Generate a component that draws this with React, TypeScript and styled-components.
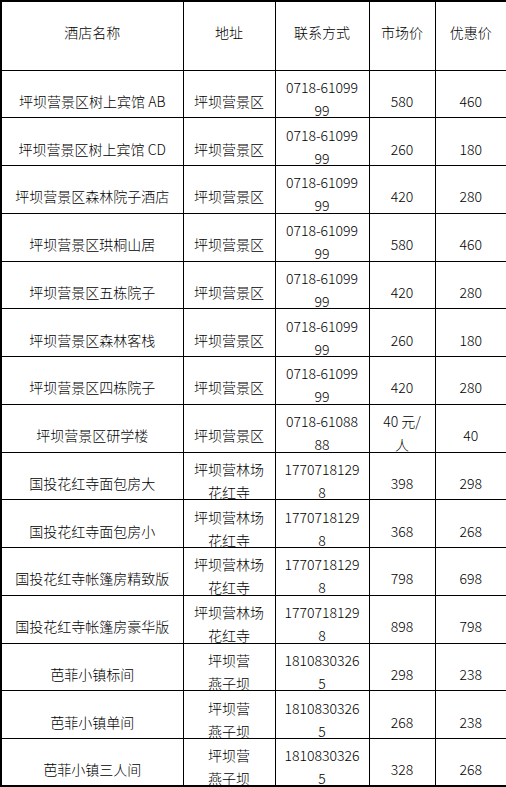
import React from 'react';
import styled, { createGlobalStyle } from 'styled-components';

const GlobalStyle = createGlobalStyle`
  html, body {
    margin: 0;
    padding: 0;
    background: #ffffff;
  }
  body {
    font-family: "Noto Sans CJK SC", "Noto Sans", sans-serif;
    color: #000000;
  }
`;

const Table = styled.table`
  width: 506px;
  border-collapse: collapse;
  table-layout: fixed;
  border: 2px solid #000;
  font-size: 14px;
  font-weight: 300;
  color: #000;
`;

const HeadRow = styled.tr`
  height: 69px;
`;

const BodyRow = styled.tr`
  height: 47.75px;
`;

const HeadCell = styled.th`
  border: 1px solid #000;
  padding: 0 8px 7px;
  font-weight: 300;
  text-align: center;
  vertical-align: middle;
  line-height: 24px;
  white-space: nowrap;
`;

const Cell = styled.td`
  border: 1px solid #000;
  padding: 10px 6px 0;
  text-align: center;
  vertical-align: middle;
`;

const Content = styled.div<{ $single: boolean }>`
  height: 24px;
  box-sizing: border-box;
  padding-top: ${p => (p.$single ? '5px' : '0')};
  display: flex;
  flex-direction: column;
  justify-content: center;
  align-items: center;
  line-height: 23px;
`;

const Line = styled.span`
  white-space: nowrap;
`;

type Hotel = {
  name: string;
  address: string[];
  phone: string[];
  market: string[];
  discount: string;
};

const phoneA = ['0718-61099', '99'];
const phoneB = ['1770718129', '8'];
const phoneC = ['1810830326', '5'];
const addrA = ['坪坝营景区'];
const addrB = ['坪坝营林场', '花红寺'];
const addrC = ['坪坝营', '燕子坝'];

const hotels: Hotel[] = [
  { name: '坪坝营景区树上宾馆 AB', address: addrA, phone: phoneA, market: ['580'], discount: '460' },
  { name: '坪坝营景区树上宾馆 CD', address: addrA, phone: phoneA, market: ['260'], discount: '180' },
  { name: '坪坝营景区森林院子酒店', address: addrA, phone: phoneA, market: ['420'], discount: '280' },
  { name: '坪坝营景区珙桐山居', address: addrA, phone: phoneA, market: ['580'], discount: '460' },
  { name: '坪坝营景区五栋院子', address: addrA, phone: phoneA, market: ['420'], discount: '280' },
  { name: '坪坝营景区森林客栈', address: addrA, phone: phoneA, market: ['260'], discount: '180' },
  { name: '坪坝营景区四栋院子', address: addrA, phone: phoneA, market: ['420'], discount: '280' },
  { name: '坪坝营景区研学楼', address: addrA, phone: ['0718-61088', '88'], market: ['40 元/', '人'], discount: '40' },
  { name: '国投花红寺面包房大', address: addrB, phone: phoneB, market: ['398'], discount: '298' },
  { name: '国投花红寺面包房小', address: addrB, phone: phoneB, market: ['368'], discount: '268' },
  { name: '国投花红寺帐篷房精致版', address: addrB, phone: phoneB, market: ['798'], discount: '698' },
  { name: '国投花红寺帐篷房豪华版', address: addrB, phone: phoneB, market: ['898'], discount: '798' },
  { name: '芭菲小镇标间', address: addrC, phone: phoneC, market: ['298'], discount: '238' },
  { name: '芭菲小镇单间', address: addrC, phone: phoneC, market: ['268'], discount: '238' },
  { name: '芭菲小镇三人间', address: addrC, phone: phoneC, market: ['328'], discount: '268' },
];

function Lines({ lines }: { lines: string[] }) {
  return (
    <Content $single={lines.length === 1}>
      {lines.map((l, i) => (
        <Line key={i}>{l}</Line>
      ))}
    </Content>
  );
}

export default function App() {
  return (
    <>
      <GlobalStyle />
      <Table>
        <colgroup>
          <col style={{ width: 182 }} />
          <col style={{ width: 92 }} />
          <col style={{ width: 94 }} />
          <col style={{ width: 66 }} />
          <col style={{ width: 72 }} />
        </colgroup>
        <thead>
          <HeadRow>
            <HeadCell>酒店名称</HeadCell>
            <HeadCell>地址</HeadCell>
            <HeadCell>联系方式</HeadCell>
            <HeadCell>市场价</HeadCell>
            <HeadCell>优惠价</HeadCell>
          </HeadRow>
        </thead>
        <tbody>
          {hotels.map((h, i) => (
            <BodyRow key={i}>
              <Cell><Lines lines={[h.name]} /></Cell>
              <Cell><Lines lines={h.address} /></Cell>
              <Cell><Lines lines={h.phone} /></Cell>
              <Cell><Lines lines={h.market} /></Cell>
              <Cell><Lines lines={[h.discount]} /></Cell>
            </BodyRow>
          ))}
        </tbody>
      </Table>
    </>
  );
}
